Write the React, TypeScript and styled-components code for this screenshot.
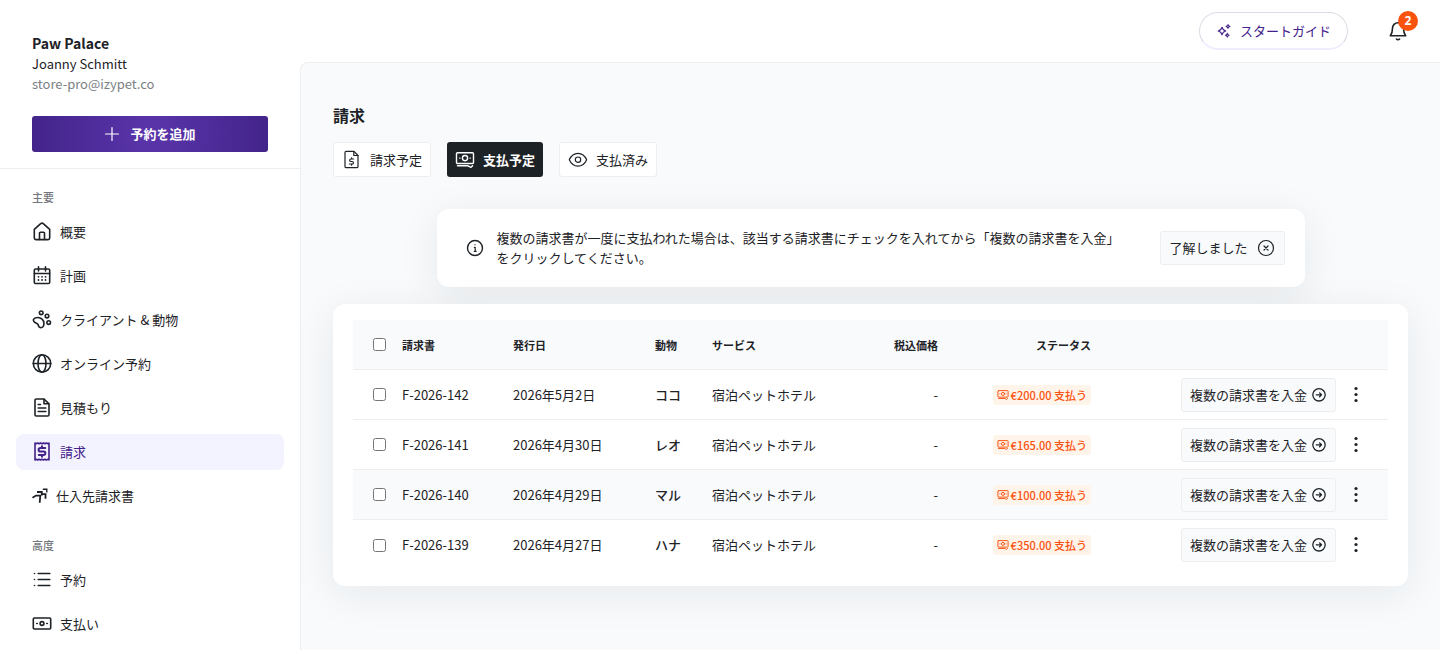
import React from "react";
import styled, { createGlobalStyle, css } from "styled-components";

const ink = "#1d2226";
const purple = "#43218a";
const line = "#eceef0";
const surface = "#f8fafc";

const GlobalStyle = createGlobalStyle`
  *, *::before, *::after { box-sizing: border-box; }
  body {
    margin: 0;
    background: #fff;
    color: ${ink};
    font-family: "Noto Sans CJK JP", "Noto Sans", sans-serif;
    font-size: 13px;
    line-height: 20px;
  }
  button { font: inherit; color: inherit; cursor: pointer; }
  a { color: inherit; text-decoration: none; }
  svg { display: block; flex: none; }
`;

/* ---------- icons ---------- */

type IconProps = { size?: number; stroke?: number; box?: number; children: React.ReactNode };

const Icon = ({ size = 20, stroke = 1.6, box = 20, children }: IconProps) => (
  <svg
    width={size}
    height={size}
    viewBox={`0 0 ${box} ${box}`}
    fill="none"
    stroke="currentColor"
    strokeWidth={stroke}
    strokeLinecap="round"
    strokeLinejoin="round"
    aria-hidden="true"
  >
    {children}
  </svg>
);

const HomeIcon = () => (
  <Icon>
    <path d="M2.300 7.400 8.700 1.700a1.900 1.900 0 0 1 2.600 0L17.700 7.400V16a1.600 1.600 0 0 1-1.600 1.600H3.900A1.600 1.600 0 0 1 2.300 16Z" />
    <path d="M7.500 17.400v-6.300a.9.900 0 0 1 .9-.9h3.200a.9.900 0 0 1 .9.900v6.300" />
  </Icon>
);

const CalendarIcon = () => (
  <Icon>
    <rect x="2.300" y="3" width="15.400" height="14.500" rx="1.3" />
    <path d="M2.300 7.500h15.400M6.500 .9v4M13.500 .9v4" />
    <g fill="currentColor" stroke="none">
      {[6.5, 10, 13.5].map((x) => (
        <React.Fragment key={x}>
          <circle cx={x} cy="10.8" r="0.9" />
          <circle cx={x} cy="14" r="0.9" />
        </React.Fragment>
      ))}
    </g>
  </Icon>
);

const PawIcon = () => (
  <Icon>
    <circle cx="9.2" cy="2.8" r="1.8" />
    <circle cx="15" cy="6.1" r="1.8" />
    <circle cx="16.700" cy="12.600" r="1.8" />
    <path d="M5.200 7.500c1.800-.2 3.500.4 4.900 1.700 1.400 1.300 2 3 1.800 4.900-.1 1-.3 1.700-.8 2.500-.6 1-2.600 1.400-3.700.6-.9-.7-.9-1.900-1.600-2.900-.7-1-1.800-1.200-2.800-1.800-1.300-.8-1.900-2.100-1.300-3.300.5-1.100 2-1.600 3.500-1.700Z" />
  </Icon>
);

const GlobeIcon = () => (
  <Icon>
    <circle cx="10" cy="9.500" r="8.700" />
    <ellipse cx="10" cy="9.500" rx="4" ry="8.700" />
    <path d="M1.300 9.500h17.400" />
  </Icon>
);

const DocumentIcon = () => (
  <Icon>
    <path d="M12 1H4.300A1.300 1.300 0 0 0 3 2.300v14.400A1.300 1.300 0 0 0 4.300 18h11.400a1.300 1.300 0 0 0 1.300-1.300V5.800Z" />
    <path d="M12 1.300v4.500h4.700M6.200 6.500h2.300M6.200 10h7.600M6.200 13.500h7.600" />
  </Icon>
);

const ReceiptIcon = () => (
  <Icon>
    <path d="M3 1l1.200.8 1.400-.8 1.500.8 1.400-.8 1.500.8 1.500-.8 1.400.8 1.500-.8 1.600.8 1-.8v17l-1-.8-1.600.8-1.500-.8-1.400.8-1.500-.8-1.500.8-1.400-.8-1.500.8-1.400-.8-1.200.8Z" />
    <path strokeWidth="2" d="M13.200 5.900H8.400a1.800 1.800 0 0 0 0 3.600h3.200a1.800 1.800 0 0 1 0 3.600H6.800M10 4.200v1.700M10 13.100v1.700" />
  </Icon>
);

const SupplierIcon = () => (
  <Icon size={16} box={16} stroke={1.8}>
    <g strokeLinecap="butt" strokeLinejoin="miter">
      <path d="M.5 9.800 4 7.600h4.300l-.6 7.200" />
      <path d="M5 4h4.800v3.500M9.800 6.200h3.700v4.600" />
      <path strokeWidth="1.400" d="M10.800 1.300h4v3.200" />
    </g>
  </Icon>
);

const ListIcon = () => (
  <Icon>
    <path d="M6.200 3.500h11.600M6.200 9.500h11.600M6.200 15.500h11.600M2.500 3.500h.01M2.500 9.500h.01M2.500 15.500h.01" />
  </Icon>
);

const CashIcon = () => (
  <Icon>
    <rect x="1.300" y="4" width="17.400" height="11" rx="1" />
    <circle cx="10" cy="9.500" r="1.900" />
    <path d="M4.700 9.500h.5M14.800 9.500h.5" />
  </Icon>
);

const PlusIcon = () => (
  <Icon size={16} box={16} stroke={1.2}>
    <path d="M8 1.500v13M1.500 8h13" />
  </Icon>
);

const SparklesIcon = () => (
  <Icon size={16} box={16} stroke={1.1}>
    <path d="M6 4.200c.5 2.400 1.400 3.300 3.800 3.800C7.400 8.500 6.500 9.400 6 11.800 5.500 9.400 4.600 8.500 2.200 8 4.600 7.500 5.500 6.600 6 4.200Z" />
    <path d="M12 1.500c.2 1.200.7 1.700 1.900 1.900-1.200.2-1.700.7-1.900 1.900-.2-1.200-.7-1.700-1.900-1.900 1.200-.2 1.700-.7 1.900-1.900ZM11.300 10.300c.2 1.200.7 1.700 1.900 1.900-1.200.2-1.700.7-1.900 1.900-.2-1.200-.7-1.700-1.900-1.900 1.200-.2 1.700-.7 1.900-1.900Z" />
  </Icon>
);

const BellIcon = () => (
  <Icon>
    <path d="M10 1.800a5.500 5.500 0 0 1 5.500 5.500c0 4.500.9 5.900 2.200 7.400H2.300C3.600 13.200 4.500 11.800 4.500 7.300A5.500 5.500 0 0 1 10 1.800ZM8.400 18a2.100 2.100 0 0 0 3.200 0" />
  </Icon>
);

const InvoiceIcon = () => (
  <Icon stroke={1.2}>
    <path d="M12 1.300H4.300A1.300 1.300 0 0 0 3 2.600v13.800a1.300 1.300 0 0 0 1.300 1.300h10.400a1.300 1.300 0 0 0 1.300-1.300V5.500Z" />
    <path d="M11.800 1.500v4H16M11.600 9H8.900a1.200 1.200 0 0 0 0 2.500h1.300a1.200 1.200 0 0 1 0 2.500H7.400M9.600 7.800v1.200M9.600 14v1.200" />
  </Icon>
);

const BanknotesIcon = ({ size = 20, stroke = 1.4 }: { size?: number; stroke?: number }) => (
  <Icon size={size} stroke={stroke}>
    <rect x="1.500" y="2.700" width="17" height="10.800" rx="1" />
    <circle cx="10" cy="8.100" r="2.600" />
    <path d="M4.700 8.100h.3M15 8.100h.3M2.500 15.800h10.500l3 1.500 1.600-1.500" />
  </Icon>
);

const EyeIcon = () => (
  <Icon stroke={1.2}>
    <path d="M1.300 9.700C3.100 5.700 6.300 3.300 10 3.300s6.900 2.400 8.700 6.400C16.900 13.700 13.700 16.100 10 16.100S3.100 13.700 1.300 9.700Z" />
    <circle cx="10" cy="9.700" r="2.700" />
  </Icon>
);

const InfoIcon = () => (
  <Icon stroke={1.4}>
    <circle cx="10" cy="10" r="7.500" />
    <path strokeWidth="1.200" d="M9.300 9.300h.9v4M9.200 13.300h2M10 6.700h.01" />
  </Icon>
);

const CloseCircleIcon = () => (
  <Icon stroke={1.2}>
    <circle cx="10" cy="10" r="7.500" />
    <path d="m8 8 4 4M12 8l-4 4" />
  </Icon>
);

const ArrowCircleIcon = () => (
  <Icon size={16} box={16} stroke={1.3}>
    <circle cx="8" cy="7.800" r="6.200" />
    <path d="M5.300 7.800h5M8.600 5.900l1.900 1.900-1.900 1.900" />
  </Icon>
);

const DotsIcon = () => (
  <Icon>
    <g fill="currentColor" stroke="none">
      <circle cx="10" cy="3.500" r="1.600" />
      <circle cx="10" cy="9.500" r="1.600" />
      <circle cx="10" cy="15.500" r="1.600" />
    </g>
  </Icon>
);

/* ---------- shell ---------- */

const Page = styled.div`
  display: flex;
  min-height: 100vh;
`;

const Sidebar = styled.aside`
  flex: none;
  width: 300px;
`;

const Profile = styled.div`
  padding: 33px 32px 16px;
  border-bottom: 1px solid ${line};
`;

const StoreName = styled.div`
  font-size: 14px;
  font-weight: 700;
  line-height: 21px;
`;

const Email = styled.div`
  color: #7b7f85;
  line-height: 19px;
`;

const AddButton = styled.button`
  display: flex;
  align-items: center;
  justify-content: center;
  gap: 10px;
  width: 100%;
  height: 36px;
  margin-top: 23px;
  border: 0;
  border-radius: 3px;
  background: radial-gradient(circle, #5a35ab, #43248a);
  color: #fff;
  font-weight: 700;
`;

const Nav = styled.nav`
  padding: 19px 16px 8px;
`;

const NavHeading = styled.h2`
  margin: 0;
  padding: 0 16px;
  color: #73777d;
  font-size: 11px;
  font-weight: 500;
  line-height: 18px;
`;

const NavList = styled.ul`
  display: flex;
  flex-direction: column;
  gap: 8px;
  margin: 0;
  padding: 8px 0 22px;
  list-style: none;
`;

const NavLink = styled.a<{ $active?: boolean }>`
  display: flex;
  align-items: center;
  gap: 8px;
  height: 36px;
  padding: 0 16px;
  border-radius: 8px;
  ${(p) =>
    p.$active &&
    css`
      background: #f3f2ff;
      color: ${purple};
    `}
`;

const Body = styled.div`
  display: flex;
  flex: 1;
  flex-direction: column;
  min-width: 0;
`;

const TopBar = styled.header`
  display: flex;
  align-items: center;
  justify-content: flex-end;
  gap: 40px;
  height: 62px;
  padding: 0 32px;
`;

const GuideButton = styled.button`
  display: flex;
  align-items: center;
  gap: 8px;
  height: 38px;
  padding: 0 16px;
  border: 1px solid #dcdbe6;
  border-bottom: 2px solid #eeecfd;
  border-radius: 19px;
  background: #fff;
  color: ${purple};
`;

const BellButton = styled.button`
  position: relative;
  padding: 0;
  border: 0;
  background: none;
`;

const BellCount = styled.span`
  position: absolute;
  top: -10px;
  right: -10px;
  width: 20px;
  height: 20px;
  border-radius: 10px;
  background: #fa520f;
  color: #fff;
  font-family: "Open Sans", sans-serif;
  font-size: 12px;
  font-weight: 700;
  line-height: 20px;
  text-align: center;
`;

const Main = styled.main`
  flex: 1;
  padding: 40px 32px 32px;
  border: solid ${line};
  border-width: 1px 0 0 1px;
  border-top-left-radius: 8px;
  background: ${surface};
`;

const Title = styled.h1`
  margin: 0;
  font-size: 16px;
  font-weight: 700;
  line-height: 24px;
`;

const Tabs = styled.div`
  display: flex;
  gap: 16px;
  margin: 15px 0 32px;
`;

const Tab = styled.button<{ $active?: boolean }>`
  display: flex;
  align-items: center;
  gap: 8px;
  height: 35px;
  padding: 0 8px;
  border: 1px solid ${line};
  border-radius: 3px;
  background: #fff;
  ${(p) =>
    p.$active &&
    css`
      border: 0;
      background: ${ink};
      color: #fff;
      font-weight: 700;
    `}
`;

const panel = css`
  border-radius: 12px;
  background: #fff;
  box-shadow: 0 8px 40px rgba(29, 34, 38, 0.08);
`;

const Notice = styled.section`
  ${panel}
  display: flex;
  align-items: center;
  gap: 12px;
  max-width: 868px;
  min-height: 78px;
  margin: 0 auto 17px;
  padding: 0 20px 0 28px;
`;

const NoticeText = styled.p`
  flex: 1;
  max-width: 632px;
  margin: 0;
`;

const SoftButton = styled.button<{ $tight?: boolean }>`
  display: flex;
  align-items: center;
  gap: ${(p) => (p.$tight ? 4 : 8)}px;
  height: 34px;
  margin-left: auto;
  padding: 0 8px;
  border: 1px solid ${line};
  border-radius: 3px;
  background: ${surface};
  white-space: nowrap;
`;

const Card = styled.section`
  ${panel}
  position: relative;
  padding: 16px 20px;
`;

const Table = styled.table`
  width: 100%;
  table-layout: fixed;
  border-collapse: separate;
  border-spacing: 0;
`;

const Row = styled.tr<{ $shaded?: boolean }>`
  height: 50px;
  background: ${(p) => (p.$shaded ? surface : "transparent")};
  &:not(:last-child) > *,
  thead & > * {
    border-bottom: 1px solid ${line};
  }
`;

const cell = css<{ $align?: "right"; $strong?: boolean }>`
  padding: 0 8px;
  text-align: ${(p) => p.$align ?? "left"};
`;

const HeadCell = styled.th`
  ${cell}
  font-size: 11px;
  font-weight: 700;
`;

const Cell = styled.td`
  ${cell}
  font-weight: ${(p) => (p.$strong ? 500 : 400)};
`;

const Check = styled.input`
  display: block;
  width: 13px;
  height: 13px;
  margin: 0 0 0 12px;
`;

const Badge = styled.span`
  display: flex;
  align-items: center;
  gap: 2px;
  width: fit-content;
  height: 20px;
  margin-left: auto;
  padding: 0 4px;
  border-radius: 3px;
  background: #fff4ea;
  color: #fa520f;
  font-size: 11px;
  font-weight: 500;
  white-space: nowrap;
`;

const Actions = styled.div`
  display: flex;
  align-items: center;
  gap: 8px;
  padding-right: 12px;
`;

const MenuButton = styled.button`
  display: flex;
  justify-content: center;
  width: 24px;
  padding: 0;
  border: 0;
  background: none;
`;

/* ---------- data ---------- */

const mainNav = [
  { label: "概要", icon: <HomeIcon /> },
  { label: "計画", icon: <CalendarIcon /> },
  { label: "クライアント & 動物", icon: <PawIcon /> },
  { label: "オンライン予約", icon: <GlobeIcon /> },
  { label: "見積もり", icon: <DocumentIcon /> },
  { label: "請求", icon: <ReceiptIcon />, active: true },
  { label: "仕入先請求書", icon: <SupplierIcon /> },
];

const advancedNav = [
  { label: "予約", icon: <ListIcon /> },
  { label: "支払い", icon: <CashIcon /> },
];

const invoices = [
  { id: "F-2026-142", date: "2026年5月2日", pet: "ココ", amount: "€200.00" },
  { id: "F-2026-141", date: "2026年4月30日", pet: "レオ", amount: "€165.00" },
  { id: "F-2026-140", date: "2026年4月29日", pet: "マル", amount: "€100.00", shaded: true },
  { id: "F-2026-139", date: "2026年4月27日", pet: "ハナ", amount: "€350.00" },
];

const columnWidths = [41, 111, 142, 57, 162, 80, 153, 289];

type NavItem = { label: string; icon: React.ReactNode; active?: boolean };

const NavItems = ({ items }: { items: NavItem[] }) => (
  <NavList>
    {items.map((item) => (
      <li key={item.label}>
        <NavLink href="#" $active={item.active} aria-current={item.active ? "page" : undefined}>
          {item.icon}
          {item.label}
        </NavLink>
      </li>
    ))}
  </NavList>
);

export default function App() {
  return (
    <>
      <GlobalStyle />
      <Page>
        <Sidebar>
          <Profile>
            <StoreName>Paw Palace</StoreName>
            <div>Joanny Schmitt</div>
            <Email>store-pro@izypet.co</Email>
            <AddButton>
              <PlusIcon />
              予約を追加
            </AddButton>
          </Profile>
          <Nav>
            <NavHeading>主要</NavHeading>
            <NavItems items={mainNav} />
            <NavHeading>高度</NavHeading>
            <NavItems items={advancedNav} />
          </Nav>
        </Sidebar>
        <Body>
          <TopBar>
            <GuideButton>
              <SparklesIcon />
              スタートガイド
            </GuideButton>
            <BellButton aria-label="通知">
              <BellIcon />
              <BellCount>2</BellCount>
            </BellButton>
          </TopBar>
          <Main>
            <Title>請求</Title>
            <Tabs>
              <Tab>
                <InvoiceIcon />
                請求予定
              </Tab>
              <Tab $active>
                <BanknotesIcon />
                支払予定
              </Tab>
              <Tab>
                <EyeIcon />
                支払済み
              </Tab>
            </Tabs>
            <Notice>
              <InfoIcon />
              <NoticeText>
                複数の請求書が一度に支払われた場合は、該当する請求書にチェックを入れてから「複数の請求書を入金」をクリックしてください。
              </NoticeText>
              <SoftButton>
                了解しました
                <CloseCircleIcon />
              </SoftButton>
            </Notice>
            <Card>
              <Table>
                <colgroup>
                  {columnWidths.map((width, i) => (
                    <col key={i} width={width} />
                  ))}
                </colgroup>
                <thead>
                  <Row $shaded>
                    <HeadCell>
                      <Check type="checkbox" aria-label="すべて選択" />
                    </HeadCell>
                    <HeadCell>請求書</HeadCell>
                    <HeadCell>発行日</HeadCell>
                    <HeadCell>動物</HeadCell>
                    <HeadCell>サービス</HeadCell>
                    <HeadCell $align="right">税込価格</HeadCell>
                    <HeadCell $align="right">ステータス</HeadCell>
                    <HeadCell />
                  </Row>
                </thead>
                <tbody>
                  {invoices.map((invoice) => (
                    <Row key={invoice.id} $shaded={invoice.shaded}>
                      <Cell>
                        <Check type="checkbox" aria-label={invoice.id} />
                      </Cell>
                      <Cell>{invoice.id}</Cell>
                      <Cell>{invoice.date}</Cell>
                      <Cell $strong>{invoice.pet}</Cell>
                      <Cell>宿泊ペットホテル</Cell>
                      <Cell $align="right">-</Cell>
                      <Cell $align="right">
                        <Badge>
                          <BanknotesIcon size={12} stroke={1.6} />
                          {invoice.amount} 支払う
                        </Badge>
                      </Cell>
                      <Cell>
                        <Actions>
                          <SoftButton $tight>
                            複数の請求書を入金
                            <ArrowCircleIcon />
                          </SoftButton>
                          <MenuButton aria-label="メニュー">
                            <DotsIcon />
                          </MenuButton>
                        </Actions>
                      </Cell>
                    </Row>
                  ))}
                </tbody>
              </Table>
            </Card>
          </Main>
        </Body>
      </Page>
    </>
  );
}
